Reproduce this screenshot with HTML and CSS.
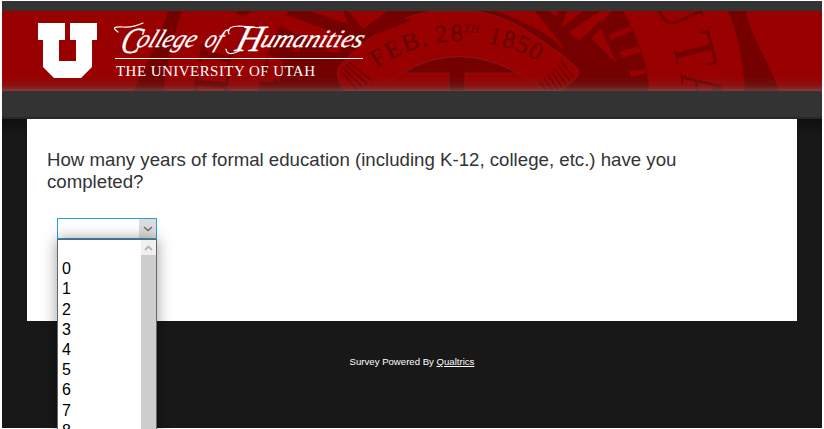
FILE: index.html
```html
<!DOCTYPE html>
<html lang="en">
<head>
<meta charset="utf-8">
<title>College of Humanities Survey</title>
<link rel="stylesheet" href="styles.css">
</head>
<body>
<div class="page">
  <header class="header">
    <svg class="banner" viewBox="2 11 820 80" width="820" height="80" role="img" aria-label="College of Humanities, The University of Utah">
      <defs>
        <path id="arc" d="M368 75A150 150 0 0 1 558 75"/>
        <linearGradient id="fade" x1="0" y1="0" x2="0" y2="1">
          <stop offset="0" stop-color="#555" stop-opacity="0"/>
          <stop offset=".6" stop-color="#555" stop-opacity=".18"/>
          <stop offset="1" stop-color="#777" stop-opacity=".5"/>
        </linearGradient>
      </defs>
      <!-- seal rings -->
      <g class="shade">
        <path d="M168 11H182C173 38 166 64 164 91H134C146 62 162 36 168 11Z"/>
        <path d="M728 11H746C749 34 768 58 779 91H745C743 60 738 35 728 11Z"/>
        <path d="M289 11H623C637 35 648 63 649 91H258C262 62 274 35 289 11Z"/>
        <path d="M235 11H252Q243 21 235 11Z"/>
        <path d="M202 43L206 44L205 50L229 56L231 49L234 50L229 68L226 67L227 62L203 57L201 62L198 61ZM195 74L198 74L198 80L225 82L226 76L229 76L228 91H224V88L197 86V91H194Z"/>
      </g>
      <!-- rays -->
      <g class="ray">
        <path d="M287 15L354 40L334 53L279 25ZM277 39L302 46L299 52ZM268 55L283 60L280 81L270 76ZM258 72L275 75L273 82L257 81ZM309 11H343L348 24ZM348 11H388L363 29Z"/>
        <path d="M549 11H559L556 17ZM561 28L583 11H567ZM569 32L600 11H612L602 22L600 21L579 41ZM601 29L591 38L617 64ZM608 35L631 26L632 31L611 40ZM619 52L639 46L641 52L622 58ZM629 71L646 69L646 73L631 77Z"/>
      </g>
      <!-- ribbon -->
      <path class="ray edge" d="M338 68C360 42 400 11 440 11H474C510 16 534 35 565 57L578 69Q580 76 574 80L562 91H345Q335 80 338 68Z"/>
      <path class="ray" d="M497 11H535L565 49L561 47C545 30 527 24 497 11Z"/>
      <path class="shade" d="M395 11H424L402 18L412 20L372 36L370 36L389 23Z"/>
      <path class="hatch" d="M341 71L357 90M343 68L362 87M346 65L367 84M349 62L372 81M561 61L573 77M558 65L570 81M555 69L566 84M552 72L562 87M548 75L558 90M544 78L553 91M540 82L547 91"/>
      <path class="shade edge" d="M402 73Q458 40 518 73H465V91H449V73Z"/>
      <path class="sealline" d="M378 91Q388 80 402 73Q458 40 518 73Q532 80 544 91"/>
      <g class="sealtext">
        <text><textPath href="#arc" startOffset="11" textLength="57">FEB.</textPath></text>
        <text><textPath href="#arc" startOffset="76" textLength="27">28</textPath></text>
        <text class="sup"><textPath href="#arc" startOffset="103">TH</textPath></text>
        <text><textPath href="#arc" startOffset="127" textLength="54">1850</textPath></text>
      </g>
      <g class="ringtext">
        <text transform="translate(651 -5) rotate(65)">U</text>
        <text transform="translate(675 56) rotate(76)" text-anchor="middle">T</text>
        <text transform="translate(680 71) rotate(84)">A</text>
      </g>
      <rect class="glow" x="2" y="76" width="820" height="15"/>
      <!-- block U -->
      <path class="logo" d="M38 23H65V40H59V61H76V40H70V23H97V40H92V67L81 78H54L43 67V40H38Z"/>
      <!-- wordmark -->
      <g class="script">
        <text class="initial" transform="translate(119 53) skewX(-14)" textLength="20" lengthAdjust="spacingAndGlyphs">C</text>
        <text transform="translate(135 47) skewX(-22)" textLength="59" lengthAdjust="spacingAndGlyphs">ollege</text>
        <text transform="translate(203 47) skewX(-22)" textLength="17" lengthAdjust="spacingAndGlyphs">of</text>
        <text class="initial" transform="translate(234 51) skewX(-16)" textLength="26" lengthAdjust="spacingAndGlyphs">H</text>
        <text transform="translate(259 47) skewX(-22)" textLength="102" lengthAdjust="spacingAndGlyphs">umanities</text>
      </g>
      <path class="swash" d="M118 32Q109 26 123 27Q132 28 143 23M229 34Q226 26 240 26L262 28M239 51Q227 57 226 49"/>
      <path class="rule" d="M115 58.5H363"/>
      <text class="university" x="116" y="76" textLength="199">THE UNIVERSITY OF UTAH</text>
    </svg>
  </header>
  <main class="card">
    <h1 class="question">How many years of formal education (including K-12, college, etc.) have you<br>completed?</h1>
    <div class="select">
      <div class="control">
        <span class="arrow"><svg width="10" height="6" viewBox="0 0 10 6"><path d="M1 1L5 4.5L9 1"/></svg></span>
      </div>
      <div class="menu">
        <ul class="options">
          <li></li><li>0</li><li>1</li><li>2</li><li>3</li><li>4</li><li>5</li><li>6</li><li>7</li><li>8</li>
        </ul>
        <div class="scroll"><span class="up"><svg width="9" height="6" viewBox="0 0 9 6"><path d="M1 5L4.5 1.5L8 5"/></svg></span></div>
      </div>
    </div>
  </main>
  <footer class="footer">Survey Powered By <a class="link" href="#">Qualtrics</a></footer>
</div>
</body>
</html>
```
FILE: styles.css
```css
* { box-sizing: border-box; }
html { overflow: hidden; }
body {
  margin: 0;
  padding: 1px 2px;
  height: 429px;
  overflow: hidden;
  background: #fff;
  font-family: "Liberation Sans", Arial, sans-serif;
}
.page {
  height: 427px;
  background: linear-gradient(#101010 118px, #181818 136px);
}
.header {
  height: 118px;
  padding-top: 10px;
  background: #333;
  border-bottom: 2px solid #292727;
}
.banner { display: block; background: #990000; }
.shade { fill: #740000; }
.ray { fill: #990000; }
.edge, .sealline { stroke: #8b1717; stroke-width: .7; }
.sealline { fill: none; }
.hatch { fill: none; stroke: #740000; stroke-width: 1.8; }
.sealtext { font: 25px "Liberation Serif", serif; fill: #690000; stroke: #690000; stroke-width: .3; }
.sup { font-size: 12px; font-style: italic; baseline-shift: 9px; }
.ringtext { font: 60px "Liberation Serif", serif; fill: #740000; }
.glow { fill: url(#fade); }
.logo { fill: #fff; }
.script { font: italic 25px "Liberation Serif", serif; fill: #fff; stroke: #fff; stroke-width: .25; }
.initial { font-size: 37px; }
.swash { fill: none; stroke: #fff; stroke-width: 1.2; stroke-linecap: round; }
.rule { stroke: #fff; stroke-width: 1; }
.university { font: 15px "Liberation Serif", serif; fill: #fff; }
.card {
  height: 202px;
  margin: 0 25px;
  padding: 30px 20px 0;
  background: #fff;
}
.question {
  margin: 0;
  color: #333;
  font-size: 18.67px;
  font-weight: 400;
  line-height: 22px;
  white-space: nowrap;
}
.select {
  position: relative;
  width: 100px;
  margin: 25px 0 0 10px;
}
.control {
  position: relative;
  display: flex;
  justify-content: flex-end;
  height: 21px;
  border: 1px solid #26a0da;
  background: #fff;
}
.arrow {
  display: flex;
  align-items: center;
  justify-content: center;
  width: 17px;
  background: #ddd;
}
.arrow svg { fill: none; stroke: #707070; stroke-width: 1.6; }
.menu {
  position: absolute;
  top: 21px;
  left: 0;
  display: flex;
  width: 100px;
  height: 196px;
  border: 1px solid #666;
  background: #fff;
  box-shadow: 0 0 14px rgba(0, 0, 0, .4);
}
.options {
  flex: 1;
  margin: -1px 0 0;
  padding: 0 0 0 4px;
  list-style: none;
  color: #000;
  font-size: 16px;
  line-height: 20.2px;
}
.options li { height: 20.2px; }
.scroll { width: 15px; background: #cdcdcd; }
.up {
  display: flex;
  align-items: center;
  justify-content: center;
  height: 15px;
  background: #f0f0f0;
}
.up svg { fill: none; stroke: #b5b5b5; stroke-width: 1.8; }
.footer {
  padding-top: 35px;
  color: #fff;
  font-size: 9.6px;
  line-height: 12px;
  text-align: center;
}
.link { color: #fff; }
```
